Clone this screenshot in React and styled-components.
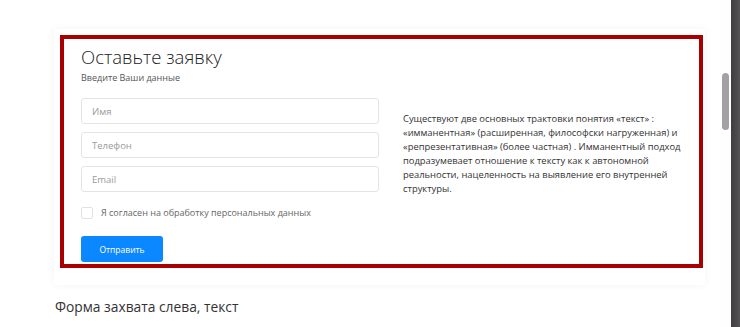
import React from 'react';
import styled, { createGlobalStyle } from 'styled-components';

const GlobalStyle = createGlobalStyle`
  html, body {
    margin: 0;
    padding: 0;
    background: #fdfdfd;
    font-family: "Open Sans", "Liberation Sans", sans-serif;
    color: #333;
  }
  * { box-sizing: border-box; }
`;

export default function App() {
  return (
    <>
      <GlobalStyle />
      <Page>
        <Main>
          <Card>
            <Highlight>
              <FormCol>
                <Title>Оставьте заявку</Title>
                <Subtitle>Введите Ваши данные</Subtitle>
                <Fields>
                  <Input type="text" placeholder="Имя" />
                  <Input type="text" placeholder="Телефон" />
                  <Input type="text" placeholder="Email" />
                </Fields>
                <Agree>
                  <Check type="checkbox" />
                  Я согласен на обработку персональных данных
                </Agree>
                <Button>Отправить</Button>
              </FormCol>
              <Text>
                Существуют две основных трактовки понятия «текст» : «имманентная» (расширенная, философски нагруженная) и «репрезентативная» (более частная) . Имманентный подход подразумевает отношение к тексту как к автономной реальности, нацеленность на выявление его внутренней структуры.
              </Text>
            </Highlight>
          </Card>
          <Caption>Форма захвата слева, текст</Caption>
        </Main>
        <Track />
        <Thumb />
      </Page>
    </>
  );
}

const Page = styled.div`
  position: relative;
  display: flex;
  width: 740px;
  height: 327px;
  overflow: hidden;
`;

const Main = styled.div`
  flex: 1;
  padding: 29px 26px 0 54px;
  background: #ffffff;
`;

const Card = styled.div`
  width: 651px;
  padding: 6px 2px 17px 6px;
  background: #fff;
  box-shadow: 0 0 8px rgba(0, 0, 0, 0.05);
`;

const Highlight = styled.div`
  display: grid;
  grid-template-columns: 298px 284px;
  column-gap: 24px;
  align-items: center;
  border: 4px solid #a80000;
  padding: 7px 0 2px 17px;
`;

const FormCol = styled.div`
  display: flex;
  flex-direction: column;
  align-items: flex-start;
`;

const Title = styled.h2`
  margin: 0;
  font-size: 18.5px;
  line-height: 22px;
  font-weight: 300;
  color: #222;
`;

const Subtitle = styled.p`
  margin: 3px 0 13px;
  font-size: 9px;
  line-height: 14px;
  color: #555;
`;

const Fields = styled.div`
  display: flex;
  flex-direction: column;
  gap: 8px;
  width: 100%;
`;

const Input = styled.input`
  width: 100%;
  height: 26px;
  padding: 0 10px;
  border: 1px solid #e4e4e4;
  border-radius: 3px;
  background: #fff;
  font-family: inherit;
  font-size: 9.5px;
  color: #333;
  outline: none;

  &::placeholder {
    color: #9a9a9a;
  }
`;

const Agree = styled.label`
  display: flex;
  align-items: center;
  gap: 8px;
  margin-top: 15px;
  font-size: 9px;
  line-height: 12px;
  color: #666;
`;

const Check = styled.input`
  appearance: none;
  margin: 0;
  width: 12px;
  height: 12px;
  border: 1px solid #e2e2e2;
  border-radius: 2px;
  background: #fff;
`;

const Button = styled.button`
  margin-top: 17px;
  width: 82px;
  height: 26px;
  border: none;
  border-radius: 3px;
  background: #0b88ff;
  color: #fff;
  font-family: inherit;
  font-size: 8.5px;
  cursor: pointer;
`;

const Text = styled.p`
  margin: 0;
  font-size: 9.4px;
  line-height: 14px;
  color: #333;
`;

const Caption = styled.p`
  margin: 12px 0 0 1px;
  font-size: 13.8px;
  line-height: 20px;
  color: #333;
`;

const Track = styled.div`
  width: 9px;
  flex-shrink: 0;
  background: linear-gradient(to right, #3f3d3f, #555355);
`;

const Thumb = styled.div`
  position: absolute;
  left: 722px;
  top: 73px;
  width: 7px;
  height: 57px;
  border-radius: 4px;
  background: #a2a2a2;
`;
